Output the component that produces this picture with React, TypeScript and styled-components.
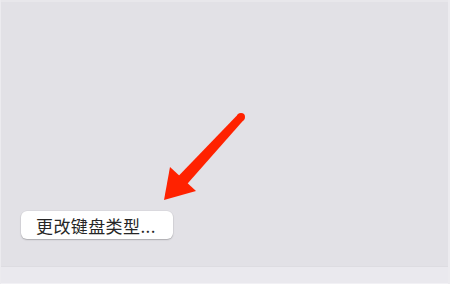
import React from "react";
import styled, { createGlobalStyle } from "styled-components";

const Global = createGlobalStyle`
  html, body { margin: 0; padding: 0; background: #eae9ee; }
  #root { width: 450px; height: 284px; }
`;

const Frame = styled.div`
  position: relative;
  width: 450px;
  height: 284px;
  display: flex;
  flex-direction: column;
  box-sizing: border-box;
  background: #eae9ee;
  border-left: 1px solid #ecebef;
  border-right: 2px solid #ecebef;
  font-family: "Noto Sans CJK SC", "Liberation Sans", sans-serif;
`;

const Panel = styled.div`
  flex: 1;
  display: flex;
  align-items: flex-end;
  background: #e2e1e6;
  border-top: 2px solid #e8e7eb;
  border-bottom: 1px solid #dddce1;
  padding: 0 0 27px 20px;
`;

const Button = styled.button`
  height: 28px;
  width: 152px;
  padding: 0 0 0 15px;
  display: flex;
  align-items: center;
  border: none;
  border-radius: 6px;
  background: #ffffff;
  box-shadow: 0 1px 1.5px rgba(0, 0, 0, 0.22), 0 0 0 0.5px rgba(0, 0, 0, 0.06);
  font-family: "Noto Sans CJK SC", "Liberation Sans", sans-serif;
  font-size: 17px;
  color: #262626;
  letter-spacing: 0.4px;
  white-space: nowrap;
`;

const Footer = styled.div`
  height: 16px;
  background: #eae9ee;
  border-bottom: 1px solid #f2f1f5;
`;

const Arrow = styled.svg`
  position: absolute;
  left: 0;
  top: 0;
  pointer-events: none;
`;

export default function App() {
  return (
    <>
      <Global />
      <Frame>
        <Panel>
          <Button>更改键盘类型...</Button>
        </Panel>
        <Footer />
        <Arrow width="450" height="284" viewBox="0 0 450 284">
          <circle cx="240" cy="117" r="4" fill="#ff2200" />
          <polygon points="242.9,119.7 237.1,114.3 175.6,177.9 184.4,186.1" fill="#ff2200" />
          <polygon points="163,200 169,167 195,191" fill="#ff2200" />
        </Arrow>
      </Frame>
    </>
  );
}
